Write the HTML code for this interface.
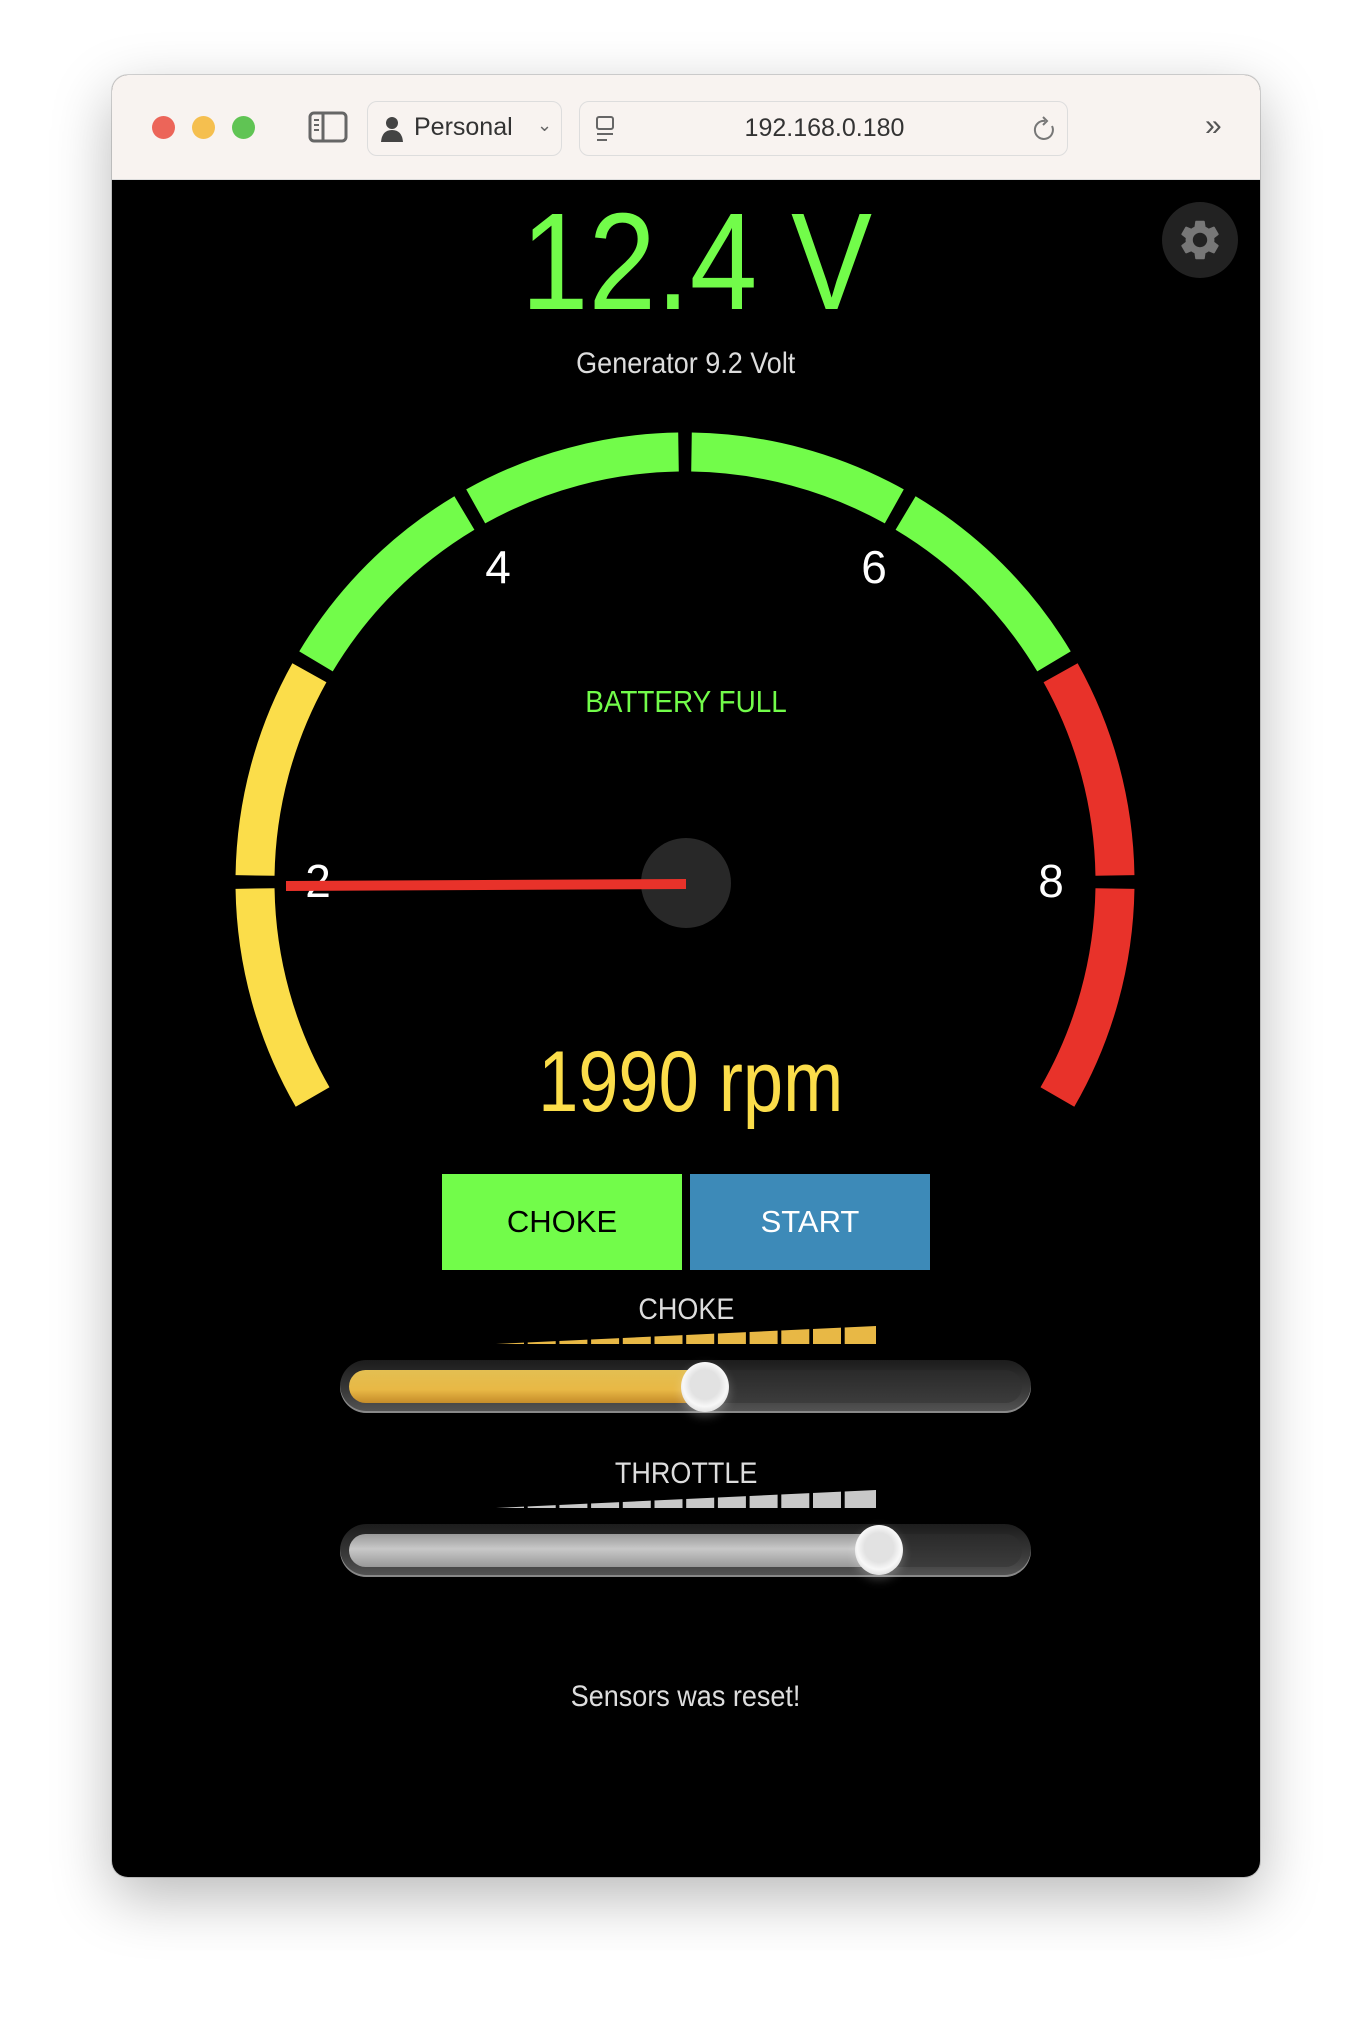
<!DOCTYPE html>
<html><head><meta charset="utf-8"><style>
*{margin:0;padding:0;box-sizing:border-box}
body{width:1372px;height:2028px;background:#fff;position:relative;overflow:hidden;font-family:"Liberation Sans",sans-serif}
.win{position:absolute;left:112px;top:75px;width:1148px;height:1802px;border-radius:16px;background:#000;overflow:hidden;box-shadow:0 20px 60px rgba(0,0,0,.28),0 0 0 1px rgba(0,0,0,.15)}
.bar{position:absolute;left:0;top:0;width:100%;height:105px;background:#f8f3f0;border-bottom:1px solid #ddd}
.dot{position:absolute;top:41px;width:23px;height:23px;border-radius:50%}
.t{position:absolute;white-space:nowrap}
.c{position:absolute;left:0;width:1372px;text-align:center;white-space:nowrap}
.track{position:absolute;left:340px;width:691px;height:53px;border-radius:27px;background:linear-gradient(#1c1c1c,#3a3a3a 60%,#555);box-shadow:inset 0 -2px 0 #888}
.inner{position:absolute;left:9px;top:10px;right:9px;height:33px;border-radius:17px;background:linear-gradient(#2a2a2a,#3c3c3c)}
.fill{position:absolute;left:9px;top:10px;height:33px;border-radius:17px}
.knob{position:absolute;width:48px;height:50px;border-radius:50%;background:radial-gradient(circle at 50% 45%,#e2e2e2 40%,#f8f8f8 60%,#bbb);box-shadow:0 4px 10px rgba(255,255,255,.25)}
</style></head><body>
<div class="win">
 <div class="bar">
  <div class="dot" style="left:40px;background:#ec6559"></div>
  <div class="dot" style="left:80px;background:#f5bf4f"></div>
  <div class="dot" style="left:120px;background:#60c454"></div>
  <svg style="position:absolute;left:196px;top:36px" width="40" height="32" viewBox="0 0 40 32"><rect x="2" y="2" width="36" height="28" rx="4" fill="none" stroke="#666" stroke-width="3"/><line x1="15" y1="2" x2="15" y2="30" stroke="#666" stroke-width="3"/><line x1="6" y1="9" x2="11" y2="9" stroke="#666" stroke-width="2"/><line x1="6" y1="14" x2="11" y2="14" stroke="#666" stroke-width="2"/><line x1="6" y1="19" x2="11" y2="19" stroke="#666" stroke-width="2"/></svg>
  <div style="position:absolute;left:255px;top:26px;width:195px;height:55px;border:1px solid #ddd;border-radius:10px;background:#f8f3f0"></div>
  <svg style="position:absolute;left:268px;top:40px" width="24" height="28" viewBox="0 0 24 28"><circle cx="12" cy="8" r="6" fill="#444"/><path d="M1 27 Q2 15 12 15 Q22 15 23 27Z" fill="#444"/></svg>
  <div class="t" style="left:302px;top:38px;font-size:25px;color:#333">Personal</div>
  <div class="t" style="left:425px;top:40px;font-size:18px;color:#666">⌄</div>
  <div style="position:absolute;left:467px;top:26px;width:489px;height:55px;border:1px solid #ddd;border-radius:10px;background:#f8f3f0"></div>
  <svg style="position:absolute;left:482px;top:40px" width="24" height="28" viewBox="0 0 24 28"><rect x="3" y="2" width="16" height="12" rx="2" fill="none" stroke="#666" stroke-width="2"/><line x1="3" y1="19" x2="19" y2="19" stroke="#666" stroke-width="2"/><line x1="3" y1="25" x2="13" y2="25" stroke="#666" stroke-width="2"/></svg>
  <div class="t" style="left:600px;top:39px;font-size:25px;color:#333;width:225px;text-align:center">192.168.0.180</div>
  <svg style="position:absolute;left:920px;top:40px" width="26" height="28" viewBox="0 0 26 28"><path d="M20 11 A9 9 0 1 1 13 6" fill="none" stroke="#777" stroke-width="2"/><path d="M11 2 L15 6 L11 10" fill="none" stroke="#777" stroke-width="2"/></svg>
  <div class="t" style="left:1093px;top:34px;font-size:30px;color:#555">»</div>
 </div>
 <div style="position:absolute;left:1050px;top:127px;width:76px;height:76px;border-radius:50%;background:#222"></div>
 <svg style="position:absolute;left:1064px;top:141px" width="48" height="48" viewBox="0 0 24 24"><path fill="#777" d="M19.14 12.94c.04-.3.06-.61.06-.94 0-.32-.02-.64-.07-.94l2.03-1.58a.49.49 0 0 0 .12-.61l-1.92-3.32a.49.49 0 0 0-.59-.22l-2.39.96c-.5-.38-1.03-.7-1.62-.94l-.36-2.54a.48.48 0 0 0-.48-.41h-3.84c-.24 0-.43.17-.47.41l-.36 2.54c-.59.24-1.13.57-1.62.94l-2.39-.96c-.22-.08-.47 0-.59.22L2.74 8.87c-.12.21-.08.47.12.61l2.03 1.58c-.05.3-.09.63-.09.94s.02.64.07.94l-2.03 1.58a.49.49 0 0 0-.12.61l1.92 3.32c.12.22.37.29.59.22l2.39-.96c.5.38 1.03.7 1.62.94l.36 2.54c.05.24.24.41.48.41h3.84c.24 0 .44-.17.47-.41l.36-2.54c.59-.24 1.13-.56 1.62-.94l2.39.96c.22.08.47 0 .59-.22l1.92-3.32c.12-.22.07-.47-.12-.61l-2.01-1.58zM12 15.6c-1.98 0-3.6-1.62-3.6-3.6s1.62-3.6 3.6-3.6 3.6 1.62 3.6 3.6-1.62 3.6-3.6 3.6z"/></svg>
</div>
<div class="c" style="top:182px;font-size:138px;line-height:160px;color:#72fc4a;left:10px"><span style="display:inline-block;transform:scaleX(.88)">12.4 V</span></div>
<div class="c" style="top:346px;font-size:30px;line-height:36px;color:#ddd;left:0"><span style="display:inline-block;transform:scaleX(.9)">Generator 9.2 Volt</span></div>
<svg style="position:absolute;left:0;top:0" width="1372" height="2028">
 <g fill="none" stroke-width="39">
  <path d="M312.6 1097 A430 430 0 0 1 255.05 888.53" stroke="#fbdd4a"/>
  <path d="M255.05 875.47 A430 430 0 0 1 309.4 672.7" stroke="#fbdd4a"/>
  <path d="M316 661.4 A430 430 0 0 1 464.4 513" stroke="#72fc4a"/>
  <path d="M475.7 506.4 A430 430 0 0 1 678.5 452.05" stroke="#72fc4a"/>
  <path d="M691.5 452.05 A430 430 0 0 1 894.3 506.4" stroke="#72fc4a"/>
  <path d="M905.6 513 A430 430 0 0 1 1054 661.4" stroke="#72fc4a"/>
  <path d="M1060.6 672.7 A430 430 0 0 1 1114.95 875.47" stroke="#e8322a"/>
  <path d="M1114.95 888.53 A430 430 0 0 1 1057.4 1097" stroke="#e8322a"/>
 </g>
 <g fill="#fff" font-family="Liberation Sans,sans-serif" font-size="46" text-anchor="middle">
  <text x="498" y="583">4</text><text x="874" y="583">6</text>
  <text x="318" y="897">2</text><text x="1051" y="897">8</text>
 </g>
 <circle cx="686" cy="883" r="45" fill="#282828"/>
 <polygon points="286,881 686,879 686,889 286,891" fill="#e8322a"/>
</svg>
<div class="c" style="top:684px;font-size:31px;line-height:36px;color:#72fc4a"><span style="display:inline-block;transform:scaleX(.9)">BATTERY FULL</span></div>
<div class="c" style="top:1032px;font-size:86px;line-height:100px;color:#fbdd4a;left:5px"><span style="display:inline-block;transform:scaleX(.84)">1990 rpm</span></div>
<div style="position:absolute;left:442px;top:1174px;width:240px;height:96px;background:#72fc4a;color:#000;font-size:31px;line-height:96px;text-align:center">CHOKE</div>
<div style="position:absolute;left:690px;top:1174px;width:240px;height:96px;background:#3d8ab8;color:#fff;font-size:31px;line-height:96px;text-align:center">START</div>
<div class="c" style="top:1293px;font-size:30px;line-height:34px;color:#ddd"><span style="display:inline-block;transform:scaleX(.9)">CHOKE</span></div>
<svg style="position:absolute;left:496px;top:1326px" width="380" height="18"><defs><pattern id="p" width="31.7" height="18" patternUnits="userSpaceOnUse"><rect width="28" height="18"/></pattern><clipPath id="w"><polygon points="0,18 380,0 380,18"/></clipPath></defs><g clip-path="url(#w)"><g fill="#e8b845"><rect x="0" y="0" width="28" height="18"/><rect x="31.7" width="28" height="18"/><rect x="63.4" width="28" height="18"/><rect x="95.1" width="28" height="18"/><rect x="126.8" width="28" height="18"/><rect x="158.5" width="28" height="18"/><rect x="190.2" width="28" height="18"/><rect x="221.9" width="28" height="18"/><rect x="253.6" width="28" height="18"/><rect x="285.3" width="28" height="18"/><rect x="317" width="28" height="18"/><rect x="348.7" width="31.3" height="18"/></g></g></svg>
<div class="track" style="top:1360px"><div class="inner"></div><div class="fill" style="width:370px;background:linear-gradient(#e3bf52,#e8b845 60%,#c58c2a)"></div></div>
<div class="knob" style="left:681px;top:1362px"></div>
<div class="c" style="top:1457px;font-size:30px;line-height:34px;color:#ddd"><span style="display:inline-block;transform:scaleX(.9)">THROTTLE</span></div>
<svg style="position:absolute;left:496px;top:1490px" width="380" height="18"><defs><clipPath id="w2"><polygon points="0,18 380,0 380,18"/></clipPath></defs><g clip-path="url(#w2)"><g fill="#c8c8c8"><rect x="0" y="0" width="28" height="18"/><rect x="31.7" width="28" height="18"/><rect x="63.4" width="28" height="18"/><rect x="95.1" width="28" height="18"/><rect x="126.8" width="28" height="18"/><rect x="158.5" width="28" height="18"/><rect x="190.2" width="28" height="18"/><rect x="221.9" width="28" height="18"/><rect x="253.6" width="28" height="18"/><rect x="285.3" width="28" height="18"/><rect x="317" width="28" height="18"/><rect x="348.7" width="31.3" height="18"/></g></g></svg>
<div class="track" style="top:1524px"><div class="inner"></div><div class="fill" style="width:540px;background:linear-gradient(#9a9a9a,#c8c8c8 45%,#999)"></div></div>
<div class="knob" style="left:855px;top:1525px"></div>
<div class="c" style="top:1680px;font-size:30px;line-height:34px;color:#ddd"><span style="display:inline-block;transform:scaleX(.9)">Sensors was reset!</span></div>
</body></html>
